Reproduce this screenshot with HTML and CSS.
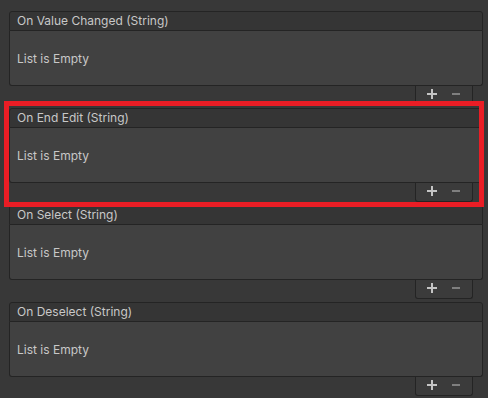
FILE: index.html
```html
<!DOCTYPE html>
<html lang="en">
<head>
    <meta charset="UTF-8">
    <title>Input Field Events</title>
    <link rel="stylesheet" href="styles.css">
</head>
<body>
    <div class="events">
        <!-- On Value Changed -->
        <div class="event">
            <div class="event-header">On Value Changed (String)</div>
            <div class="event-body">List is Empty</div>
            <div class="event-footer">
                <span class="footer-btn plus">
                    <svg width="10" height="10" viewBox="0 0 10 10"><path d="M4 0h2v4h4v2H6v4H4V6H0V4h4z" fill="currentColor"/></svg>
                </span>
                <span class="footer-btn minus">
                    <svg width="8" height="10" viewBox="0 0 8 10"><rect x="0" y="4" width="8" height="2" fill="currentColor"/></svg>
                </span>
            </div>
        </div>
        <!-- On End Edit, highlighted -->
        <div class="event highlight">
            <div class="event-header">On End Edit (String)</div>
            <div class="event-body">List is Empty</div>
            <div class="event-footer">
                <span class="footer-btn plus">
                    <svg width="10" height="10" viewBox="0 0 10 10"><path d="M4 0h2v4h4v2H6v4H4V6H0V4h4z" fill="currentColor"/></svg>
                </span>
                <span class="footer-btn minus">
                    <svg width="8" height="10" viewBox="0 0 8 10"><rect x="0" y="4" width="8" height="2" fill="currentColor"/></svg>
                </span>
            </div>
        </div>
        <!-- On Select -->
        <div class="event">
            <div class="event-header">On Select (String)</div>
            <div class="event-body">List is Empty</div>
            <div class="event-footer">
                <span class="footer-btn plus">
                    <svg width="10" height="10" viewBox="0 0 10 10"><path d="M4 0h2v4h4v2H6v4H4V6H0V4h4z" fill="currentColor"/></svg>
                </span>
                <span class="footer-btn minus">
                    <svg width="8" height="10" viewBox="0 0 8 10"><rect x="0" y="4" width="8" height="2" fill="currentColor"/></svg>
                </span>
            </div>
        </div>
        <!-- On Deselect -->
        <div class="event">
            <div class="event-header">On Deselect (String)</div>
            <div class="event-body">List is Empty</div>
            <div class="event-footer">
                <span class="footer-btn plus">
                    <svg width="10" height="10" viewBox="0 0 10 10"><path d="M4 0h2v4h4v2H6v4H4V6H0V4h4z" fill="currentColor"/></svg>
                </span>
                <span class="footer-btn minus">
                    <svg width="8" height="10" viewBox="0 0 8 10"><rect x="0" y="4" width="8" height="2" fill="currentColor"/></svg>
                </span>
            </div>
        </div>
    </div>
</body>
</html>
```

FILE: styles.css
```css
*, *::after{
    margin:0;
    padding:0;
    box-sizing:border-box;
}

body{
    background-color:#383838;
    font-family:Inter,'Noto Sans',sans-serif;
    font-size:12px;
    color:#c8c8c8;
    height:398px;
    overflow:hidden;
}

.events{
    display:flex;
    flex-direction:column;
    gap:3px;
    padding:11px 0 0 9px;
    width:483px;
}

.event{
    position:relative;
    display:flex;
    flex-direction:column;
}

.event-header{
    height:20px;
    line-height:18px;
    padding-left:7px;
    background-color:#353535;
    border:1px solid #242424;
    border-radius:3px 3px 0 0;
}

.event-body{
    height:55px;
    display:flex;
    align-items:center;
    padding-left:7px;
    background-color:#414141;
    border:1px solid #242424;
    border-top:none;
    border-radius:0 0 3px 3px;
}

.event-footer{
    align-self:flex-end;
    display:flex;
    align-items:flex-start;
    width:58px;
    height:19px;
    margin-right:10px;
    padding:3px 0 0 11px;
    gap:15px;
    background-color:#3b3b3b;
    border:1px solid #242424;
    border-top:none;
    border-radius:0 0 3px 3px;
}

.footer-btn{
    display:flex;
    height:10px;
}

.plus{
    color:#c4c4c4;
}

.minus{
    color:#7f7f7f;
}

/* red highlight frame drawn over the block */
.highlight{
    z-index:1;
}
.highlight::after{
    content:"";
    position:absolute;
    top:-7px;
    left:-5px;
    width:480px;
    height:106px;
    border:5px solid #ea1d25;
    pointer-events:none;
}
```
